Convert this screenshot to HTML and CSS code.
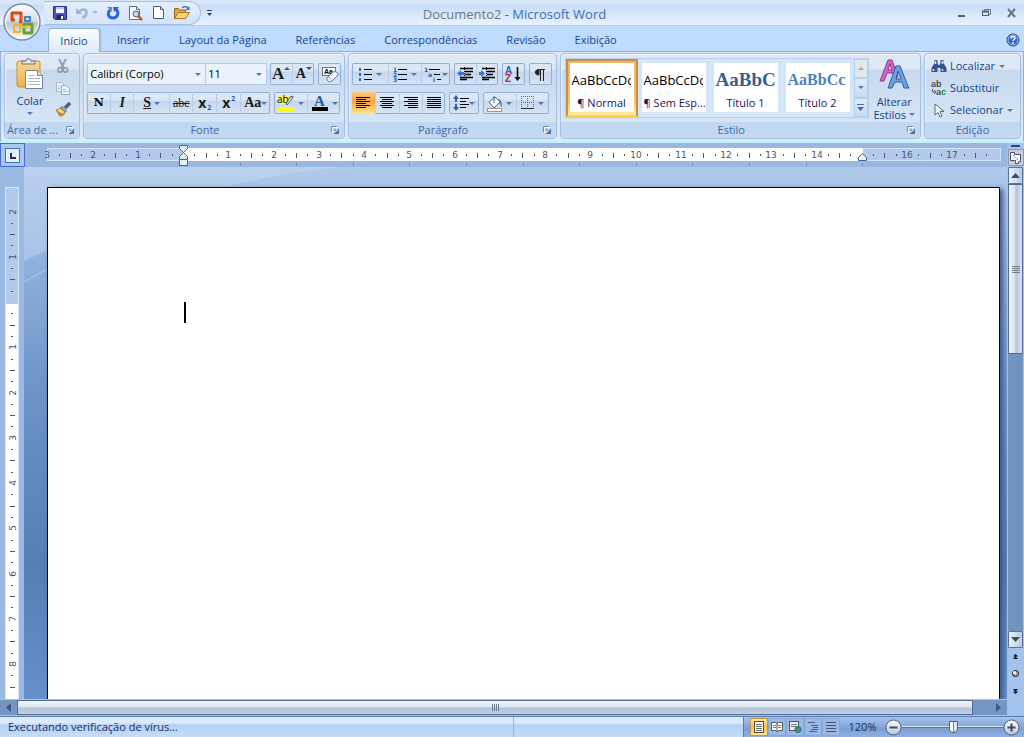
FILE: index.html
```html
<!DOCTYPE html>
<html lang="pt-BR">
<head>
<meta charset="utf-8">
<title>Documento2 - Microsoft Word</title>
<link rel="stylesheet" href="styles.css">
</head>
<body>
<svg width="0" height="0" class="defs" aria-hidden="true">
  <defs>
    <linearGradient id="gold" x2="0" y2="1"><stop offset="0" stop-color="#fbd98c"/><stop offset="1" stop-color="#eeb04c"/></linearGradient>
    <linearGradient id="ball" x2="0" y2="1"><stop offset="0" stop-color="#fff"/><stop offset=".48" stop-color="#d5dae3"/><stop offset=".52" stop-color="#b9c2d0"/><stop offset="1" stop-color="#fff"/></linearGradient>
    <linearGradient id="steel" x2="0" y2="1"><stop offset="0" stop-color="#fff"/><stop offset="1" stop-color="#b4c5dc"/></linearGradient>
    <symbol id="launch" viewBox="0 0 8 8"><path d="M.5 6V.5H6" fill="none" stroke="#6a8bb5"/><path d="M1.5 7V1.500H7" fill="none" stroke="#fff"/><path d="M3 3l2 2M7.500 3v4.500H3" fill="none" stroke="#4f6f9c"/><path d="M4 7h3V4z" fill="#4f6f9c"/></symbol>
  </defs>
</svg>

<header class="titlebar">
  <button class="office" aria-label="Botão Office">
    <svg width="40" height="40" viewBox="0 0 40 40"><circle cx="20" cy="20" r="18" fill="url(#ball)" stroke="#7d8ca5" stroke-width="1.500"/><circle cx="20" cy="20" r="16.500" fill="none" stroke="#fff"/>
      <g fill="none" stroke-linejoin="round"><path d="M13 18h-3v-7h9v9h-2" stroke="#d84a16" stroke-width="3"/><path d="M21 17h-1v-4" stroke="#f47b20" stroke-width="2"/><rect x="23" y="15" width="5" height="4" stroke="#3d82cf" stroke-width="2"/><rect x="12" y="23" width="6" height="7" stroke="#f2b51b" stroke-width="2"/><rect x="22" y="22" width="8" height="9" stroke="#5ea53c" stroke-width="3"/></g><path d="M21 25h8" stroke="#f9c31d" stroke-width="2"/></svg>
  </button>
  <nav class="quick" aria-label="Acesso rápido">
    <button aria-label="Salvar"><svg width="14" height="14" viewBox="0 0 14 14"><path d="M.5.5h13v13H2L.5 12z" fill="#5553b5" stroke="#30308c"/><path d="M3 1h8v6H3z" fill="#f2f4ff"/><path d="M3 1h8v2H3z" fill="#b9c7ec"/><path d="M3.500 9h7v4h-7z" fill="#25285f"/><path d="M8 10h2v3H8z" fill="#fff"/></svg></button>
    <button aria-label="Desfazer"><svg width="14" height="14" viewBox="0 0 14 14"><path d="M4 6c3-4 8-3 7.500 1-.3 2.500-2 4-4 5" fill="none" stroke="#9db4d8" stroke-width="2.500"/><path d="M1 2v6h6z" fill="#9db4d8"/></svg></button>
    <i class="arrow pale"></i>
    <button aria-label="Repetir"><svg width="14" height="14" viewBox="0 0 14 14"><path d="M10 3c4 4 1 9-3 9-5 0-6-5-3-8" fill="none" stroke="#2e63d2" stroke-width="3"/><path d="M7 1h6L8 6z" fill="#2e63d2"/><path d="M1 1h5v5z" fill="#5a8be6"/></svg></button>
    <button aria-label="Visualizar impressão"><svg width="16" height="16" viewBox="0 0 16 16"><path d="M1.500 1.500h7l3 3v10h-10z" fill="#fff" stroke="#5d6d86"/><path d="M8.500 1.500v3h3" fill="#cfdaeb" stroke="#5d6d86"/><circle cx="8" cy="9" r="3" fill="#b8dcf2" stroke="#516079"/><path d="M10 11l4 4" stroke="#b4622b" stroke-width="2.500"/></svg></button>
    <button aria-label="Novo"><svg width="13" height="15" viewBox="0 0 13 15"><path d="M1.500 1.500h7l3 3v9h-10z" fill="#fff" stroke="#435a7d"/><path d="M8.500 1.500v3h3" fill="#cfdaeb" stroke="#435a7d"/></svg></button>
    <button aria-label="Abrir"><svg width="18" height="15" viewBox="0 0 18 15"><path d="M1.500 13V3.500h4l1 1.500h6v3" fill="#e1a83a" stroke="#8f641b"/><path d="M1.500 13.500l4-6h11l-4 6z" fill="#ffd779" stroke="#a4741f"/><path d="M9 3c2-2 4-2 6 0" fill="none" stroke="#3f6fae" stroke-width="1.500"/><path d="M16.500 1v4h-4z" fill="#3f6fae"/></svg></button>
  </nav>
  <button class="customize" aria-label="Personalizar"><svg width="7" height="8" viewBox="0 0 7 8"><path d="M1 1.500h5" stroke="#25406f"/><path d="M1 4h5L3.500 7z" fill="#25406f"/></svg></button>
  <h1><span>Documento2</span> - Microsoft Word</h1>
  <div class="winbtns">
    <button aria-label="Minimizar"><svg width="11" height="10" viewBox="0 0 11 10"><path d="M2 8h7" stroke="#56616f" stroke-width="2"/></svg></button>
    <button aria-label="Restaurar"><svg width="11" height="10" viewBox="0 0 11 10"><path d="M3.500 3V1.500h6v5H8" fill="none" stroke="#6d7888"/><rect x="1.500" y="3.500" width="6" height="4" fill="none" stroke="#56616f"/><path d="M1 3.500h7" stroke="#56616f" stroke-width="2"/></svg></button>
    <button aria-label="Fechar"><svg width="11" height="10" viewBox="0 0 11 10"><path d="M2 1l7 8M9 1L2 9" stroke="#6a7380" stroke-width="2"/></svg></button>
  </div>
</header>

<nav class="tabs">
  <button class="active">Início</button><button>Inserir</button><button>Layout da Página</button><button>Referências</button><button>Correspondências</button><button>Revisão</button><button>Exibição</button>
  <button class="help" aria-label="Ajuda"><svg width="14" height="14" viewBox="0 0 14 14"><circle cx="7" cy="7" r="6" fill="#2b62d4" stroke="#163f99"/><circle cx="7" cy="7" r="5" fill="none" stroke="#a7c8ff"/><path d="M5 5.500c0-3 4-2.500 4-.5 0 1.500-2 1.500-2 3M7 9v2" fill="none" stroke="#fff" stroke-width="1.500"/></svg></button>
</nav>

<section class="ribbon">
  <div class="group clip">
    <div class="body">
      <button class="big"><svg width="30" height="32" viewBox="0 0 30 32"><rect x="2" y="3" width="23" height="26" rx="2" fill="url(#gold)" stroke="#c58d3c"/><path d="M7 6V3h4c0-3 5-3 5 0h4v3z" fill="#dfe5ec" stroke="#66707e"/><path d="M10.500 12.500h12l5 5v13h-17z" fill="#fff" stroke="#7383a0"/><path d="M22.500 12.500v5h5" fill="#dbe5f3" stroke="#7383a0"/><path d="M13 17.500h7M13 20.500h12M13 23.500h12M13 26.500h12" stroke="#a7b9d6"/></svg><span>Colar</span><i class="arrow"></i></button>
      <div class="clipcol">
        <button aria-label="Recortar"><svg width="14" height="16" viewBox="0 0 14 16"><path d="M3 1l5 9M10 1L5 10" stroke="#8ea0bd" stroke-width="2"/><circle cx="4" cy="12" r="2.200" fill="none" stroke="#8596b4" stroke-width="1.500"/><circle cx="9.500" cy="12" r="2.200" fill="none" stroke="#8596b4" stroke-width="1.500"/></svg></button>
        <button aria-label="Copiar"><svg width="16" height="14" viewBox="0 0 16 14"><path d="M1.500 1.500h5l3 3v6h-8z" fill="#edf3fb" stroke="#a9b8d2"/><path d="M6.500 4.500h5l3 3v6h-8z" fill="#edf3fb" stroke="#98a9c6"/><path d="M8 8.500h3M8 10.500h5M3 5.500h2M3 7.500h2" stroke="#a9b8d2"/></svg></button>
        <button aria-label="Pincel"><svg width="17" height="15" viewBox="0 0 17 15"><path d="M10 6l5-5" stroke="#515c87" stroke-width="3.500"/><path d="M7 4l5 5-2 1-5-4z" fill="#8f9dbe" stroke="#59688c" stroke-width=".5"/><path d="M5 6l5 4c-1 3-2 4-5 4L1 8c2 0 3-1 4-2z" fill="#ffdd76" stroke="#a47b25"/><path d="M2 8l4 3 4 0-5 3z" fill="#c0872b"/></svg></button>
      </div>
    </div>
    <footer><span>Área de ...</span><button aria-label="Opções da área de transferência"><svg width="8" height="8"><use href="#launch"/></svg></button></footer>
  </div>

  <div class="group font">
    <div class="body rows">
      <div class="row">
        <div class="combos">
          <div class="combo family"><select aria-label="Fonte"><option>Calibri (Corpo)</option></select><i class="arrow"></i></div>
          <div class="combo size"><select aria-label="Tamanho"><option>11</option></select><i class="arrow"></i></div>
        </div>
        <div class="set">
          <button class="w22" aria-label="Aumentar fonte"><b class="serif s16">A</b><i class="up"></i></button>
          <button class="w22" aria-label="Reduzir fonte"><b class="serif s13">A</b><i class="up down"></i></button>
        </div>
        <div class="set"><button class="w23" aria-label="Limpar formatação"><svg width="18" height="17" viewBox="0 0 18 17"><rect x="1.500" y="1.500" width="13" height="8" fill="#fff" stroke="#68758d"/><text x="3" y="8" class="tiny">Aa</text><path d="M6 12l6-6c2-1 5 0 5 3l-6 6c-2 2-6 0-5-3z" fill="#f4f6fc" stroke="#68758d"/><path d="M7 11c2 0 3 2 4 4" fill="none" stroke="#9aa7c0"/></svg></button></div>
      </div>
      <div class="row">
        <div class="set">
          <button class="w23" aria-label="Negrito"><b class="heavy">N</b></button>
          <button class="w23" aria-label="Itálico"><em class="serif s13">I</em></button>
          <button class="w36" aria-label="Sublinhado"><u class="serif s13">S</u><i class="arrow"></i></button>
          <button class="w23" aria-label="Tachado"><s class="serif s12">abc</s></button>
          <button class="w24" aria-label="Subscrito"><b class="s13">x</b><sub>2</sub></button>
          <button class="w24" aria-label="Sobrescrito"><b class="s13">x</b><sup>2</sup></button>
          <button class="w30" aria-label="Maiúsculas e minúsculas"><b class="serif s13">Aa</b><i class="arrow"></i></button>
        </div>
        <div class="set">
          <button class="w33" aria-label="Realce"><svg width="18" height="18" viewBox="0 0 18 18"><rect x="0" y="1" width="12" height="9" fill="#fff16b"/><text x="0" y="9" class="abtext">ab</text><path d="M9 10l4-7 3-1-1 3-5 6z" fill="#d5e0ef" stroke="#51647e"/><path d="M1 13h16v4H1z" fill="#ff0"/></svg><i class="arrow"></i></button>
          <button class="w33" aria-label="Cor da fonte"><svg width="18" height="18" viewBox="0 0 18 18"><text x="3" y="12" class="atext">A</text><path d="M1 13h16v4H1z" fill="#000"/></svg><i class="arrow"></i></button>
        </div>
      </div>
    </div>
    <footer><span>Fonte</span><button aria-label="Opções de fonte"><svg width="8" height="8"><use href="#launch"/></svg></button></footer>
  </div>

  <div class="group para">
    <div class="body rows">
      <div class="row">
        <div class="set">
          <button class="w36" aria-label="Marcadores"><svg width="15" height="14" viewBox="0 0 15 14"><path d="M1 2.500h2M1 7.500h2M1 12.500h2" stroke="#3a62ad" stroke-width="3"/><path d="M6 2.500h8M6 7.500h8M6 12.500h8" stroke="#000"/></svg><i class="arrow"></i></button>
          <button class="w33" aria-label="Numeração"><svg width="15" height="15" viewBox="0 0 15 15"><text x="0" y="5" class="num">1</text><text x="0" y="10" class="num">2</text><text x="0" y="15" class="num">3</text><path d="M5 2.500h9M5 7.500h9M5 12.500h9" stroke="#000"/></svg><i class="arrow"></i></button>
          <button class="w29" aria-label="Lista de vários níveis"><svg width="18" height="15" viewBox="0 0 18 15"><text x="0" y="5" class="num">1</text><text x="4" y="10" class="num">a</text><text x="9" y="15" class="num">i</text><path d="M5 2.500h11M10 7.500h6M13 12.500h4" stroke="#000"/></svg><i class="arrow"></i></button>
        </div>
        <div class="set">
          <button class="w22" aria-label="Diminuir recuo"><svg width="16" height="14" viewBox="0 0 16 14"><path d="M3 1.500h13M8 4.500h8M8 7.500h6M3 10.500h13M3 12.500h7" stroke="#000" stroke-width="1.500"/><path d="M7.500 0v14" stroke="#000" stroke-dasharray="1 1"/><path d="M0 6.500L4 3v2h3v3H4v2z" fill="#3d74d1"/></svg></button>
          <button class="w22" aria-label="Aumentar recuo"><svg width="16" height="14" viewBox="0 0 16 14"><path d="M3 1.500h13M8 4.500h8M8 7.500h6M3 10.500h13M3 12.500h7" stroke="#000" stroke-width="1.500"/><path d="M7.500 0v14" stroke="#000" stroke-dasharray="1 1"/><path d="M6 6.500L2 3v2H0v3h2v2z" fill="#3d74d1"/></svg></button>
        </div>
        <div class="set"><button class="w23" aria-label="Classificar"><svg width="16" height="17" viewBox="0 0 16 17"><text x="0" y="8" class="sort blue">A</text><text x="0" y="16" class="sort red">Z</text><path d="M12.500 1v12" stroke="#000" stroke-width="1.500"/><path d="M9.500 11h6l-3 4z"/></svg></button></div>
        <div class="set"><button class="w23" aria-label="Mostrar tudo"><svg width="12" height="13" viewBox="0 0 12 13"><path d="M11 1.500H5C0 1.500 0 7 5 7V1" fill="#222" stroke="#222"/><path d="M6.500 1v12M9.500 1v12" stroke="#222"/></svg></button></div>
      </div>
      <div class="row">
        <div class="set">
          <button class="w23 on" aria-label="Alinhar à esquerda"><svg width="14" height="12" viewBox="0 0 14 12"><path d="M0 .5h14M0 2.500h10M0 4.500h14M0 6.500h10M0 8.500h14M0 10.500h10" stroke="#000"/></svg></button>
          <button class="w24" aria-label="Centralizar"><svg width="14" height="12" viewBox="0 0 14 12"><path d="M0 .5h14M2 2.500h10M0 4.500h14M2 6.500h10M0 8.500h14M2 10.500h10" stroke="#000"/></svg></button>
          <button class="w23" aria-label="Alinhar à direita"><svg width="14" height="12" viewBox="0 0 14 12"><path d="M0 .5h14M4 2.500h10M0 4.500h14M4 6.500h10M0 8.500h14M4 10.500h10" stroke="#000"/></svg></button>
          <button class="w23" aria-label="Justificar"><svg width="14" height="12" viewBox="0 0 14 12"><path d="M0 .5h14M0 2.500h14M0 4.500h14M0 6.500h14M0 8.500h14M0 10.500h14" stroke="#000"/></svg></button>
        </div>
        <div class="set"><button class="w30" aria-label="Espaçamento"><svg width="16" height="16" viewBox="0 0 16 16"><path d="M3 3v4M3 9v4" stroke="#2b5fb5" stroke-width="2"/><path d="M0 4l3-4 3 4zM0 12l3 4 3-4z" fill="#2b5fb5"/><path d="M7 3.500h9M7 6.500h6M7 9.500h9M7 12.500h6" stroke="#000"/></svg><i class="arrow"></i></button></div>
        <div class="set">
          <button class="w33" aria-label="Sombreamento"><svg width="17" height="17" viewBox="0 0 17 17"><path d="M3 7l6-5 5 5-6 6z" fill="#fff" stroke="#4d6184"/><path d="M8 8V1" stroke="#4d6184"/><path d="M11 4c4 0 5 3 5 8-2-1-2-4-3-6z" fill="#477bc4"/><rect x="1.500" y="13.500" width="14" height="3" fill="#fff" stroke="#a09689"/></svg><i class="arrow"></i></button>
          <button class="w33" aria-label="Bordas"><svg width="14" height="14" viewBox="0 0 14 14"><path d="M.5 0v12M6.500 0v12M12.500 0v12M0 .5h13M0 6.500h13" stroke="#5c6e8c" stroke-dasharray="1 1"/><path d="M0 12.500h13" stroke="#23344f"/></svg><i class="arrow"></i></button>
        </div>
      </div>
    </div>
    <footer><span>Parágrafo</span><button aria-label="Opções de parágrafo"><svg width="8" height="8"><use href="#launch"/></svg></button></footer>
  </div>

  <div class="group style">
    <div class="body">
      <div class="gallery">
        <button class="card chosen"><span class="sample">AaBbCcDc</span><span class="name">¶ Normal</span></button>
        <button class="card"><span class="sample">AaBbCcDc</span><span class="name">¶ Sem Esp...</span></button>
        <button class="card"><span class="sample h1s">AaBbCc</span><span class="name">Título 1</span></button>
        <button class="card"><span class="sample h2s">AaBbCc</span><span class="name">Título 2</span></button>
        <div class="galnav"><button class="off" aria-label="Acima"><i class="up gray"></i></button><button aria-label="Abaixo"><i class="arrow"></i></button><button aria-label="Mais"><svg width="7" height="7" viewBox="0 0 7 7"><path d="M0 .5h7" stroke="#4a6fae"/><path d="M0 3h7L3.500 7z" fill="#4a6fae"/></svg></button></div>
      </div>
      <button class="change"><svg width="31" height="32" viewBox="0 0 31 32"><path fill-rule="evenodd" d="M1 22L9 1h4l6 17-3 1-2-5H8l-3 8zM9 11h4l-2-6z" fill="#d063c5" stroke="#8c3a8d"/><path fill-rule="evenodd" d="M9 29L17 7h4l8 20 1 2h-5l-2-6h-7l-3 6zM17 20h5l-3-8z" fill="#6d9fe3" stroke="#2e5da9"/></svg><span>Alterar</span><span>Estilos <i class="arrow"></i></span></button>
    </div>
    <footer><span>Estilo</span><button aria-label="Opções de estilo"><svg width="8" height="8"><use href="#launch"/></svg></button></footer>
  </div>

  <div class="group edit">
    <div class="body editlist">
      <button><svg width="15" height="14" viewBox="0 0 15 14"><path d="M3 1h3v3l1 2h1l1-2V1h3v3l3 5v4H9V9H6v4H0V9l3-5z" fill="#36558b"/><path d="M4 2v3M11 2v3M2 10v2M11 10v2" stroke="#d0e0f5" stroke-width="1.500"/></svg><span>Localizar</span><i class="arrow"></i></button>
      <button><svg width="16" height="16" viewBox="0 0 16 16"><text x="0" y="7" class="rep">ab</text><text x="5" y="15" class="rep">a<tspan fill="#1b8a2b">c</tspan></text><path d="M1.500 9v3H4M3 10l2 2-2 2" fill="none" stroke="#3d62a3"/></svg><span>Substituir</span></button>
      <button><svg width="15" height="15" viewBox="0 0 15 15"><path d="M3.500 1v11l3-2.500 2 4.500 2-1-2-4.500h4z" fill="#fff" stroke="#55657f"/></svg><span>Selecionar</span><i class="arrow"></i></button>
    </div>
    <footer><span>Edição</span></footer>
  </div>
</section>

<main class="workspace">
  <div class="corner"><button aria-label="Tabulação"><svg width="15" height="15" viewBox="0 0 15 15"><rect x=".5" y=".5" width="14" height="14" fill="#e6effa" stroke="#3e6fc9"/><path d="M6 5v5h5" fill="none" stroke="#222f47" stroke-width="2"/></svg></button></div>
  <div class="hruler"><svg id="hr" width="100%" height="24"></svg></div>
  <div class="vtools"><button class="split" aria-label="Dividir"></button><button class="rulerbtn" aria-label="Régua"><svg width="14" height="14" viewBox="0 0 14 14"><path d="M1.500 1.500h4v2h6v7h-2v2h-3v-3h-5z" fill="#f8fafc" stroke="#45536b"/><path d="M4 4l5 5" stroke="#45536b" stroke-dasharray="1 1"/></svg></button></div>
  <div class="vruler"><svg id="vr" width="24" height="100%"></svg></div>
  <div class="desk">
    <svg class="swoosh" width="100%" height="130" aria-hidden="true"><path d="M0 94C110 42 210 10 320 0H0z" fill="#c6d9f1" opacity=".45"/><path d="M0 115C110 52 210 12 340 0" fill="none" stroke="#b2cbeb" stroke-width="1"/></svg>
    <article class="page"><div class="caret"></div></article>
  </div>
  <div class="vscroll">
    <button class="sbtn" aria-label="Rolar para cima"><svg width="9" height="5"><path d="M0 5h9L4.500 0z" fill="#3a4b70"/></svg></button>
    <div class="track"><div class="thumb"><i></i><i></i><i></i><i></i></div></div>
    <button class="sbtn" aria-label="Rolar para baixo"><svg width="9" height="5"><path d="M0 0h9L4.500 5z" fill="#3a4b70"/></svg></button>
    <button class="nav" aria-label="Página anterior"><svg width="5" height="6"><path d="M2.500 0L5 2.500H0zM2.500 2.500L5 5H0z"/></svg></button>
    <button class="nav" aria-label="Selecionar objeto"><svg width="9" height="9"><circle cx="4.500" cy="4.500" r="3" fill="#aaa" stroke="#111"/><circle cx="3.500" cy="3.500" r="1.500" fill="#fff"/></svg></button>
    <button class="nav" aria-label="Próxima página"><svg width="5" height="6"><path d="M2.500 6L5 3.500H0zM2.500 3.500L5 1H0z"/></svg></button>
  </div>
  <div class="hscroll">
    <button aria-label="Rolar para a esquerda"><svg width="5" height="9"><path d="M5 0v9L0 4.500z" fill="#3f5786"/></svg></button>
    <div class="hthumb"><i></i><i></i><i></i><i></i></div>
    <div class="hrest"></div>
    <button aria-label="Rolar para a direita"><svg width="5" height="9"><path d="M0 0v9l5-4.500z" fill="#3f5786"/></svg></button>
  </div>
  <div class="scrollcorner"></div>
</main>

<footer class="status">
  <span class="msg">Executando verificação de vírus...</span>
  <div class="fill"></div>
  <div class="tools">
    <div class="views">
      <button class="on" aria-label="Layout de impressão"><svg width="12" height="12"><rect x="1.500" y=".5" width="9" height="11" fill="#fff" stroke="#4b4b43"/><path d="M3 3.500h6M3 5.500h6M3 7.500h6M3 9.500h6" stroke="#68675b"/></svg></button>
      <button aria-label="Leitura"><svg width="12" height="12"><path d="M.5 1.500h4l1.500 1 1.500-1h4v8h-4L6 11 4.500 9.500h-4zM6 2v9" fill="#fff" stroke="#555"/><path d="M2 4.500h3M2 6.500h3M7 4.500h3M7 6.500h3" stroke="#777"/></svg></button>
      <button aria-label="Web"><svg width="13" height="12"><rect x=".5" y=".5" width="9" height="9" fill="#eef" stroke="#555"/><path d="M2 3.500h6M2 5.500h6" stroke="#777"/><circle cx="9" cy="8.500" r="3" fill="#3c9b63" stroke="#286496"/></svg></button>
      <button aria-label="Tópicos"><svg width="12" height="12"><path d="M1 1.500h7M4 4.500h7M6 6.500h5M4 8.500h7M2 10.500h8" stroke="#555f6f"/></svg></button>
      <button aria-label="Rascunho"><svg width="12" height="12"><path d="M1 1.500h10M1 4.500h10M1 7.500h10M1 10.500h10" stroke="#4e5560"/></svg></button>
    </div>
    <button class="pct">120%</button>
    <button class="round" aria-label="Reduzir zoom"><svg width="17" height="17"><circle cx="8.500" cy="8.500" r="7.500" fill="url(#steel)" stroke="#4b5f82"/><path d="M4.500 8.500h8" stroke="#3e4c63" stroke-width="2"/></svg></button>
    <input class="zoom" type="range" min="0" max="100" value="51" aria-label="Zoom">
    <button class="round" aria-label="Ampliar zoom"><svg width="17" height="17"><circle cx="8.500" cy="8.500" r="7.500" fill="url(#steel)" stroke="#4b5f82"/><path d="M4.500 8.500h8M8.500 4.500v8" stroke="#3e4c63" stroke-width="2"/></svg></button>
  </div>
</footer>
<script src="rulers.js"></script>
</body>
</html>
```

FILE: styles.css
```css
* { box-sizing: border-box; }
body { margin: 0; height: 100vh; overflow: hidden; display: flex; flex-direction: column; background: #bfdbff; color: #15428b; font: 11px/14px "Open Sans", "Noto Sans", sans-serif; }
button { border: 0; background: none; padding: 0; margin: 0; font: inherit; color: inherit; display: flex; align-items: center; justify-content: center; }
svg { display: block; flex: none; }
svg.defs { position: absolute; }

.arrow { flex: none; width: 0; height: 0; border: solid transparent; border-width: 3px 3px 0; border-top-color: #5578b3; }
.arrow.pale { border-top-color: #a9bad3; }
.up { align-self: flex-start; margin-top: 4px; border: solid transparent; border-width: 0 3px 3px; border-bottom-color: #34579a; }
.up.down { border-width: 3px 3px 0; border-top-color: #34579a; }
.up.gray { margin: 0; align-self: center; border-bottom-color: #a5aab2; }

/* title bar */
.titlebar { flex: none; height: 26px; display: flex; align-items: center; background: linear-gradient(#d7e6f9 0 4px, #c7dcf8 5px, #dbe9fb 16px, #e8f2fe); border-bottom: 1px solid #b0cdf2; }
.office { position: absolute; left: 2px; top: 2px; z-index: 2; }
.quick { margin-left: 44px; height: 24px; width: 157px; padding-left: 8px; display: flex; align-items: center; gap: 8px; border: 1px solid #a3bde3; border-left-color: transparent; border-radius: 0 12px 12px 0; background: linear-gradient(#e4effd, #d3e3f8); }
.quick .arrow { margin: 0 0 0 -5px; }
.quick button { flex: none; }
.customize { margin-left: 5px; }
.titlebar h1 { flex: 1; margin: 0; padding: 3px 140px 0 0; text-align: center; font-size: 13px; line-height: 18px; font-weight: 400; color: #3b6db5; }
.titlebar h1 span { color: #6b7788; }
.winbtns { display: flex; gap: 14px; padding-right: 7px; }

.tabs { flex: none; height: 26px; display: flex; align-items: flex-end; padding-left: 48px; background: #bfdbff; border-bottom: 1px solid #8db2e3; }
.tabs button { height: 23px; padding: 0 14px 0 13px; border: 1px solid transparent; }
.tabs .active { height: 24px; width: 52px; padding: 0; margin-right: 3px; margin-bottom: -1px; border: 1px solid #8db2e3; border-bottom: 0; border-radius: 4px 4px 0 0; background: linear-gradient(#fafcff, #dfeaf7); box-shadow: 1px 0 2px #9bbbe0; }
.tabs .help { margin-left: auto; padding: 0; margin-right: 3px; }

/* ribbon */
.ribbon { flex: none; height: 91px; padding: 1px 2px 2px 3px; display: flex; gap: 3px; border: 1px solid #8db2e3; border-top: 0; border-bottom: 2px solid #b9f3fb; border-radius: 0 0 4px 4px; background: linear-gradient(#e0eaf6, #c9daee 20px, #dcebfa); }
.group { display: flex; flex-direction: column; border: 1px solid #a5bfe0; border-radius: 4px; overflow: hidden; background: linear-gradient(#dee8f5 0 15px, #c9d9ed 16px, #d9e8f8); box-shadow: inset 1px 1px #edf4fc; }
.clip { flex: 75 0 0; }
.font { flex: 262 0 0; }
.para { flex: 209 0 0; }
.style { flex: 363 0 0; }
.edit { flex: 96 0 0; }
.body { flex: 1; min-height: 0; display: flex; }
.group > footer { flex: none; height: 16px; background: #c1d8f0; color: #3e6aaa; display: flex; align-items: center; padding: 0 5px; }
.group > footer span { flex: 1; text-align: center; white-space: nowrap; padding-right: 10px; }
.group.edit > footer span { padding: 0; }
.group.clip > footer { padding-left: 2px; }
.group.clip > footer span { text-align: left; padding: 0; }
.big { width: 50px; flex-direction: column; justify-content: flex-start; padding-top: 4px; gap: 4px; }
.clipcol { display: flex; flex-direction: column; gap: 7px; padding: 4px 0 0; }
.clipcol button { height: 15px; width: 16px; }
.rows { flex-direction: column; gap: 7px; padding: 9px 3px 0; }
.row { display: flex; gap: 4px; }
.combos { display: flex; margin-right: -1px; }
.combo { display: grid; align-items: center; border: 1px solid #b1cbeb; height: 22px; background: #eaf2fb; }
.combo.family { width: 119px; }
.combo.size { width: 61px; border-left: 0; }
.combo > * { grid-area: 1 / 1; }
.combo .arrow { justify-self: end; margin-right: 4px; pointer-events: none; }
.combo select { appearance: none; width: 100%; height: 20px; padding: 0 2px; border: 0; background: none; font: inherit; color: #000; }
.set { display: flex; height: 22px; border-radius: 2px; box-shadow: inset 0 0 0 1px #92afd6; background: linear-gradient(#dbe7f5 0 8px, #c5d7ed 9px, #d6e5f6); }
.set button { color: #1c1c1c; gap: 3px; white-space: nowrap; }
.set button + button { border-left: 1px solid #b9cde8; }
.w22 { width: 22px; } .w23 { width: 23px; } .w24 { width: 24px; } .w29 { width: 29px; } .w30 { width: 30px; } .w33 { width: 33px; } .w36 { width: 36px; }
.set .w22, .set .w29, .set .w30 { gap: 0; }
.set .on { background: linear-gradient(#fbc98a, #fba440 9px, #fee584); }
.serif { font-family: "Liberation Serif", serif; }
.s16 { font-size: 17px; } .s13 { font-size: 14px; } .s12 { font-size: 12px; }
.heavy { font-family: "DejaVu Serif", serif; color: #000; }
.set u, .set em { font-weight: 700; }
.set sub, .set sup { font-size: 7px; line-height: 8px; color: #2858b0; font-weight: 700; }
.set sub { align-self: flex-end; margin-bottom: 2px; } .set sup { align-self: flex-start; margin-top: 3px; }
.set .w24 { gap: 1px; }
.tiny { font: bold 7px "Liberation Sans", sans-serif; }
.abtext { font: 10px "Open Sans", sans-serif; }
.atext { font: bold 15px "Liberation Serif", serif; fill: #2d5796; }
.num { font: bold 6px "DejaVu Sans", sans-serif; fill: #2b57ac; }
.sort { font: bold 10px "Liberation Sans", sans-serif; }
.blue { fill: #3461aa; } .red { fill: #a83232; }
.rep { font: bold 9px "Liberation Sans", sans-serif; fill: #4b4f57; }

.gallery { display: flex; margin: 4px 0 4px 4px; height: 60px; border: 1px solid #b5cfee; background: #d5e5f8; }
.card { width: 72px; padding: 4px; flex-direction: column; justify-content: flex-start; }
.card .sample, .card .name { width: 64px; background: #fff; text-align: left; white-space: nowrap; overflow: hidden; padding: 0 2px; }
.card .sample { height: 29px; line-height: 34px; color: #000; font-size: 13px; border-right: 3px solid #fff; }
.card .name { height: 20px; line-height: 21px; text-align: center; color: #17155f; }
.card .h1s { font: bold 19px/34px "Liberation Serif", serif; color: #365f91; }
.card .h2s { font: bold 16px/34px "Liberation Serif", serif; color: #4f81bd; }
.card.chosen { padding: 2px; border: 2px solid #c29048; border-bottom-color: #ffce4a; background: linear-gradient(#f5b26c, #ffbf62 40px, #fff0a0); }
.galnav { display: flex; flex-direction: column; width: 14px; }
.galnav button { flex: 1; border: 1px solid #b5cfee; background: linear-gradient(#e0ecfa, #c6daf2); }
.galnav .off { background: #e5e7ea; }
.change { flex: 1; flex-direction: column; justify-content: flex-start; padding-top: 5px; line-height: 13px; }
.change svg { margin-bottom: 4px; }
.change span { display: flex; align-items: center; gap: 3px; }
.editlist { flex-direction: column; padding: 1px 0 0 6px; }
.editlist button { height: 22px; gap: 3px; justify-content: flex-start; }
.editlist svg { width: 16px; }
.editlist .arrow { margin-left: 1px; }

/* document area */
.workspace { flex: 1; min-height: 0; display: grid; grid-template: 24px 1fr 17px / 24px 1fr 17px; background: #9ab9e3; }
.corner { width: 25px; height: 24px; border: 1px solid #3e6fc9; background: #abc7ed; display: flex; align-items: center; justify-content: center; z-index: 1; }
.hruler { background: #9ab7df; }
.vruler { background: #9ab9e3; min-height: 0; overflow: hidden; }
.ruletext { font: 9px "DejaVu Sans", sans-serif; fill: #4d5663; text-anchor: middle; }
.vtools { display: flex; flex-direction: column; background: #a4c2ee; align-items: center; padding-top: 2px; gap: 2px; }
.split { width: 9px; height: 2px; background: #3a4863; }
.rulerbtn { width: 16px; height: 17px; border: 1px solid #8d9ab0; background: #c7ccd6; }
.desk { min-height: 0; padding: 20px 7px 0 23px; display: grid; overflow: hidden; background: linear-gradient(#afc9e9, #8eafdb 100px, #6e94c8 220px, #567eb4 400px, #6690cc); }
.swoosh { grid-area: 1 / 1; margin: -20px 0 0 -23px; }
.page { grid-area: 1 / 1; z-index: 1; background: #fff; border: 1px solid #000; border-bottom: 0; box-shadow: 3px 2px 5px #3c5a86; padding: 114px 136px; }
.caret { width: 2px; height: 21px; background: #000; }
.vscroll { display: flex; flex-direction: column; align-items: center; background: #a4c2ee; min-height: 0; }
.sbtn { width: 15px; height: 17px; border: 1px solid #57719f; border-radius: 1px; background: linear-gradient(90deg, #edf2f8, #b9cade); }
.track { flex: 1; width: 15px; background: #7293c0; }
.thumb { height: 170px; border: 1px solid #526b9b; background: linear-gradient(90deg, #f2f5fa, #dce4ee 40%, #b3c4d8 55%, #dae4f0); display: flex; flex-direction: column; align-items: center; justify-content: center; gap: 1px; }
.thumb i { width: 8px; height: 1px; background: #6c7f91; }
.nav { height: 17px; width: 16px; }
.hscroll { grid-column: 1 / 3; display: flex; align-items: stretch; background: #7596c2; border: solid #a7c4eb; border-width: 1px 0; }
.hscroll button { width: 17px; }
.hthumb { flex: 956; border: 1px solid #526b9b; background: linear-gradient(#f4f6fa, #dce4ee 45%, #b3c4d8 55%, #c4d1e1); display: flex; align-items: center; justify-content: center; gap: 1px; }
.hthumb i { height: 7px; width: 1px; background: #6c7f91; }
.hrest { flex: 17; }
.scrollcorner { background: #a4c2ee; }

/* status bar */
.status { flex: none; height: 21px; display: flex; align-items: center; border-top: 1px solid #567db0; background: linear-gradient(#dceafc 0 6px, #b3d0f5 8px, #c6dcf8); color: #15305f; }
.msg { flex: 511 0 0; padding-left: 8px; border-right: 1px solid #8db2e3; line-height: 20px; }
.fill { flex: 232 0 0; }
.tools { display: flex; align-self: stretch; padding-right: 4px; border-left: 1px solid #567db0; background: linear-gradient(#a5c3ef, #7e9fd1 60%, #8eb0e2); }
.views { display: flex; padding: 1px 0 1px 6px; }
.views button { width: 18px; border: 1px solid #86a8d7; background: #98b9e8; }
.views .on { background: linear-gradient(#ffe3a0, #fdbd55, #ffe78c); border-color: #bf9548; }
.pct { width: 45px; }
.round { width: 17px; }
.zoom { appearance: none; width: 101px; background: none; margin: 0; }
.zoom::-webkit-slider-runnable-track { height: 13px; background: linear-gradient(transparent 5px, #d5e5fb 5px 6px, #5575a8 6px 7px, transparent 7px); }
.zoom::-webkit-slider-thumb { appearance: none; width: 9px; height: 12px; background: linear-gradient(90deg, #fff 3px, #6482ac 3px 4px, #dbe6f3 4px); border: 1px solid #48628e; border-radius: 1px 1px 5px 5px; }
```

FILE: rulers.js
```javascript
const CM = 45.25;
const NS = 'http://www.w3.org/2000/svg';

function add(svg, name, attrs, text) {
  const el = document.createElementNS(NS, name);
  for (const key in attrs) el.setAttribute(key, attrs[key]);
  if (text !== undefined) el.textContent = text;
  svg.appendChild(el);
}

/* Draws quarter dots, half ticks and centimetre numbers along one axis. */
function marks(svg, zero, from, to, vertical, skip) {
  for (let q = from; q <= to; q++) {
    if (q === 0 || q === skip) continue;
    const p = Math.round(zero + q * CM / 4);
    const label = Math.abs(q / 4);
    if (q % 4 === 0) {
      add(svg, 'text', vertical
        ? { x: 0, y: 0, class: 'ruletext', transform: `translate(16 ${p}) rotate(-90)` }
        : { x: p, y: 15, class: 'ruletext' }, label);
    } else {
      const len = q % 2 === 0 ? 5 : 2;
      add(svg, 'rect', vertical
        ? { x: 12 - Math.floor(len / 2), y: p, width: len, height: 1, fill: '#4d5663' }
        : { x: p, y: 12 - Math.floor(len / 2), width: 1, height: len, fill: '#4d5663' });
    }
  }
}

function draw() {
  const hr = document.getElementById('hr');
  const vr = document.getElementById('vr');
  const w = hr.getBoundingClientRect().width;
  const h = vr.getBoundingClientRect().height;
  hr.replaceChildren();
  vr.replaceChildren();
  const right = w - 7;
  add(hr, 'rect', { x: 23.5, y: 5.5, width: right - 23, height: 12, fill: '#b3caec', stroke: '#d6e5fa' });
  add(hr, 'rect', { x: 160, y: 5, width: 679, height: 13, fill: '#fff' });
  marks(hr, 159, -12, Math.floor((right - 163) / CM * 4), false, 60);
  for (let i = 1; i < 13; i++) add(hr, 'rect', { x: 159 + Math.round(i * 56.6), y: 20, width: 1, height: 3, fill: '#788ba8' });
  const face = { fill: '#e6eef8', stroke: '#42669f' };
  add(hr, 'path', { d: 'M155.5 2.500h8v3l-4 4-4-4zM159.500 9.500l4 4v3h-8v-3zM155.500 16.500h8v6h-8z', ...face });
  add(hr, 'path', { d: 'M838.500 10.500l4 4v3h-8v-3z', ...face });

  add(vr, 'rect', { x: 5.5, y: 20.5, width: 13, height: h, fill: '#b3caec', stroke: '#d6e5fa' });
  add(vr, 'rect', { x: 6, y: 137, width: 12, height: h, fill: '#fff' });
  marks(vr, 135, -8, Math.floor((h - 138) / CM * 4), true);
}

draw();
addEventListener('resize', draw);
```
